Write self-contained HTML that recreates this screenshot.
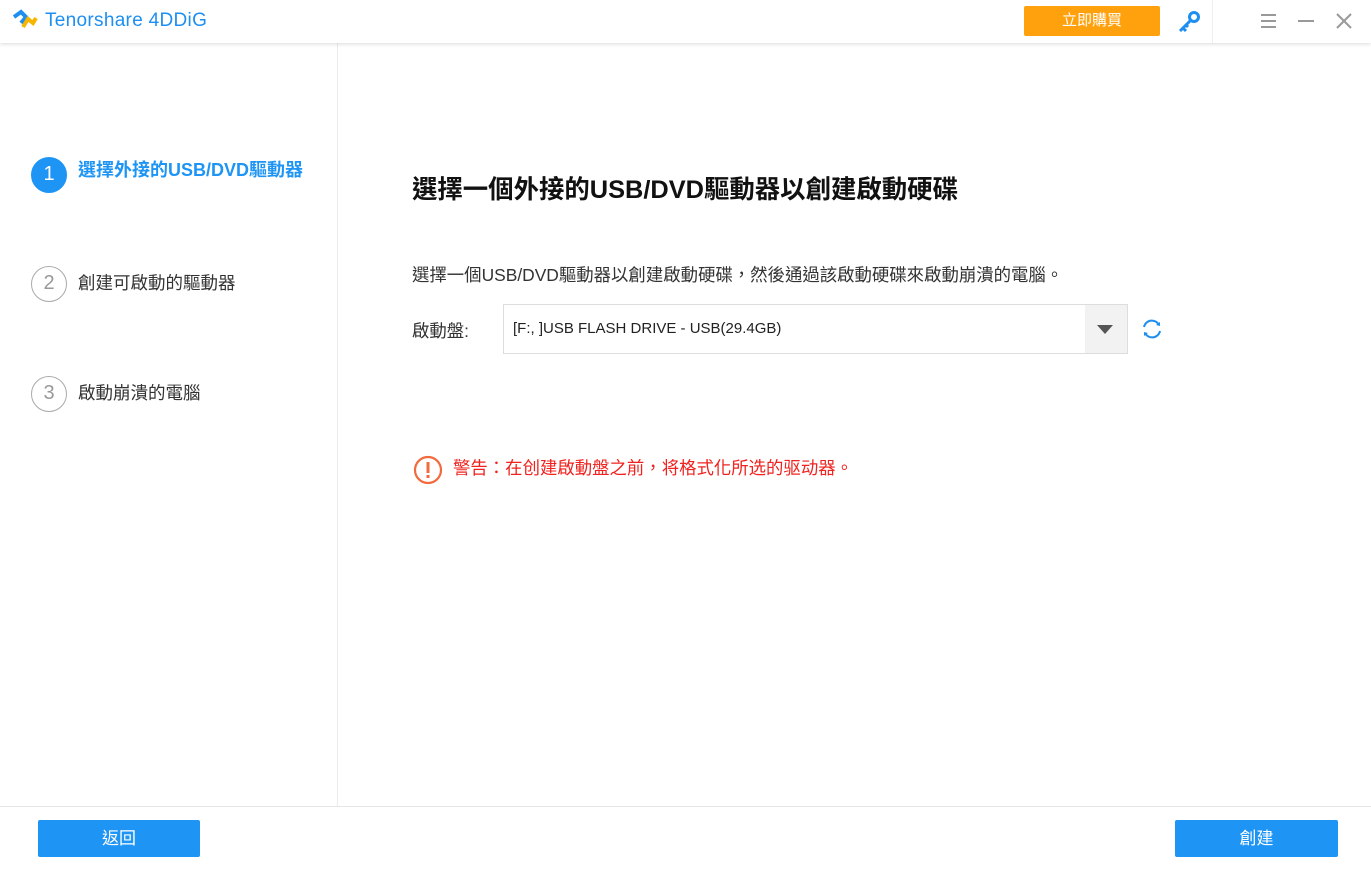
<!DOCTYPE html>
<html><head><meta charset="utf-8"><style>
*{margin:0;padding:0;box-sizing:border-box}
body{width:1371px;height:869px;background:#fff;font-family:"Liberation Sans","Noto Sans CJK TC",sans-serif;position:relative;overflow:hidden;color:#222}
.top{position:absolute;left:0;top:0;width:1371px;height:43px;background:#fff;box-shadow:0 1px 4px rgba(0,0,0,.15);z-index:2}
.abs{position:absolute}
.side{position:absolute;left:0;top:43px;width:338px;height:763px;border-right:1px solid #ececec}
.circ{position:absolute;width:36px;height:36px;border-radius:50%;border:1.5px solid #aaa;color:#999;font-size:20px;text-align:center;line-height:33px}
.step{position:absolute;left:78px;font-size:17.5px;color:#333}
.foot{position:absolute;left:0;top:806px;width:1371px;height:63px;border-top:1px solid #e6e6e6}
.btn{position:absolute;height:37px;background:#1e95f5;color:#fff;font-size:17px;text-align:center;line-height:37px;border-radius:2px}
</style></head><body>
<div class="top">
<svg class="abs" style="left:12px;top:9px" width="26" height="24" viewBox="0 0 26 24"><path d="M2 8 L9 3 L14 8 L9 14" fill="none" stroke="#1e8ff0" stroke-width="4"/><path d="M11 18 L16 10 L21 14 L24 9" fill="none" stroke="#f7b500" stroke-width="4"/></svg>
<div class="abs" style="left:45px;top:10px;font-size:19px;color:#1e8ff0;letter-spacing:.3px">Tenorshare 4DDiG</div>
<div class="abs" style="left:1024px;top:6px;width:136px;height:30px;background:#ffa10c;border-radius:2px;color:#fff;font-size:15px;text-align:center;line-height:30px">立即購買</div>
<svg class="abs" style="left:1177px;top:10px" width="24" height="24" viewBox="0 0 24 24"><circle cx="17" cy="7" r="4.5" fill="none" stroke="#1e8ff0" stroke-width="3"/><path d="M14 10 L3 21 M6 18 L9 21 M9 15 L11 17" stroke="#1e8ff0" stroke-width="3" fill="none"/></svg>
<div class="abs" style="left:1212px;top:0;width:1px;height:43px;background:#eee"></div>
<div class="abs" style="left:1261px;top:14px;width:15px;height:2px;background:#999;box-shadow:0 6px 0 #999,0 12px 0 #999"></div>
<div class="abs" style="left:1298px;top:20px;width:16px;height:2px;background:#999"></div>
<svg class="abs" style="left:1335px;top:12px" width="18" height="18" viewBox="0 0 18 18"><path d="M2 2L16 16M16 2L2 16" stroke="#999" stroke-width="2"/></svg>
</div>
<div class="side">
<div class="circ" style="left:31px;top:114px;background:#1e95f5;border-color:#1e95f5;color:#fff">1</div>
<div class="step" style="top:113px;color:#1e95f5;font-weight:bold;font-size:18px">選擇外接的USB/DVD驅動器</div>
<div class="circ" style="left:31px;top:223px">2</div>
<div class="step" style="top:227px">創建可啟動的驅動器</div>
<div class="circ" style="left:31px;top:333px">3</div>
<div class="step" style="top:337px">啟動崩潰的電腦</div>
</div>
<div class="abs" style="left:412px;top:170px;font-size:25.4px;font-weight:bold;color:#111">選擇一個外接的USB/DVD驅動器以創建啟動硬碟</div>
<div class="abs" style="left:412px;top:262px;font-size:17.4px;color:#333">選擇一個USB/DVD驅動器以創建啟動硬碟，然後通過該啟動硬碟來啟動崩潰的電腦。</div>
<div class="abs" style="left:412px;top:318px;font-size:17.4px;color:#333">啟動盤:</div>
<div class="abs" style="left:503px;top:304px;width:625px;height:50px;border:1px solid #ddd">
<div class="abs" style="left:9px;top:15px;font-size:15px;color:#222">[F:, ]USB FLASH DRIVE - USB(29.4GB)</div>
<div class="abs" style="right:0;top:0;width:42px;height:48px;background:#f2f2f2"></div>
<div class="abs" style="right:14px;top:20px;width:0;height:0;border-left:8px solid transparent;border-right:8px solid transparent;border-top:9px solid #555"></div>
</div>
<svg class="abs" style="left:1141px;top:318px" width="22" height="22" viewBox="0 0 22 22"><path d="M3 9 A8 8 0 0 1 18 7" fill="none" stroke="#1e8ff0" stroke-width="2"/><path d="M19 13 A8 8 0 0 1 4 15" fill="none" stroke="#1e8ff0" stroke-width="2"/><path d="M15 7 L19 8 L19 4Z M7 15 L3 14 L3 18Z" fill="#1e8ff0"/></svg>
<svg class="abs" style="left:413px;top:455px" width="30" height="30" viewBox="0 0 30 30"><circle cx="15" cy="15" r="13" fill="none" stroke="#f26a3d" stroke-width="2.2"/><rect x="13.5" y="7" width="3" height="11" fill="#f26a3d"/><rect x="13.5" y="20" width="3" height="3" fill="#f26a3d"/></svg>
<div class="abs" style="left:453px;top:455px;font-size:17.4px;color:#f0221e">警告：在创建啟動盤之前，将格式化所选的驱动器。</div>
<div class="foot"></div>
<div class="btn" style="left:38px;top:820px;width:162px">返回</div>
<div class="btn" style="left:1175px;top:820px;width:163px">創建</div>
</body></html>
